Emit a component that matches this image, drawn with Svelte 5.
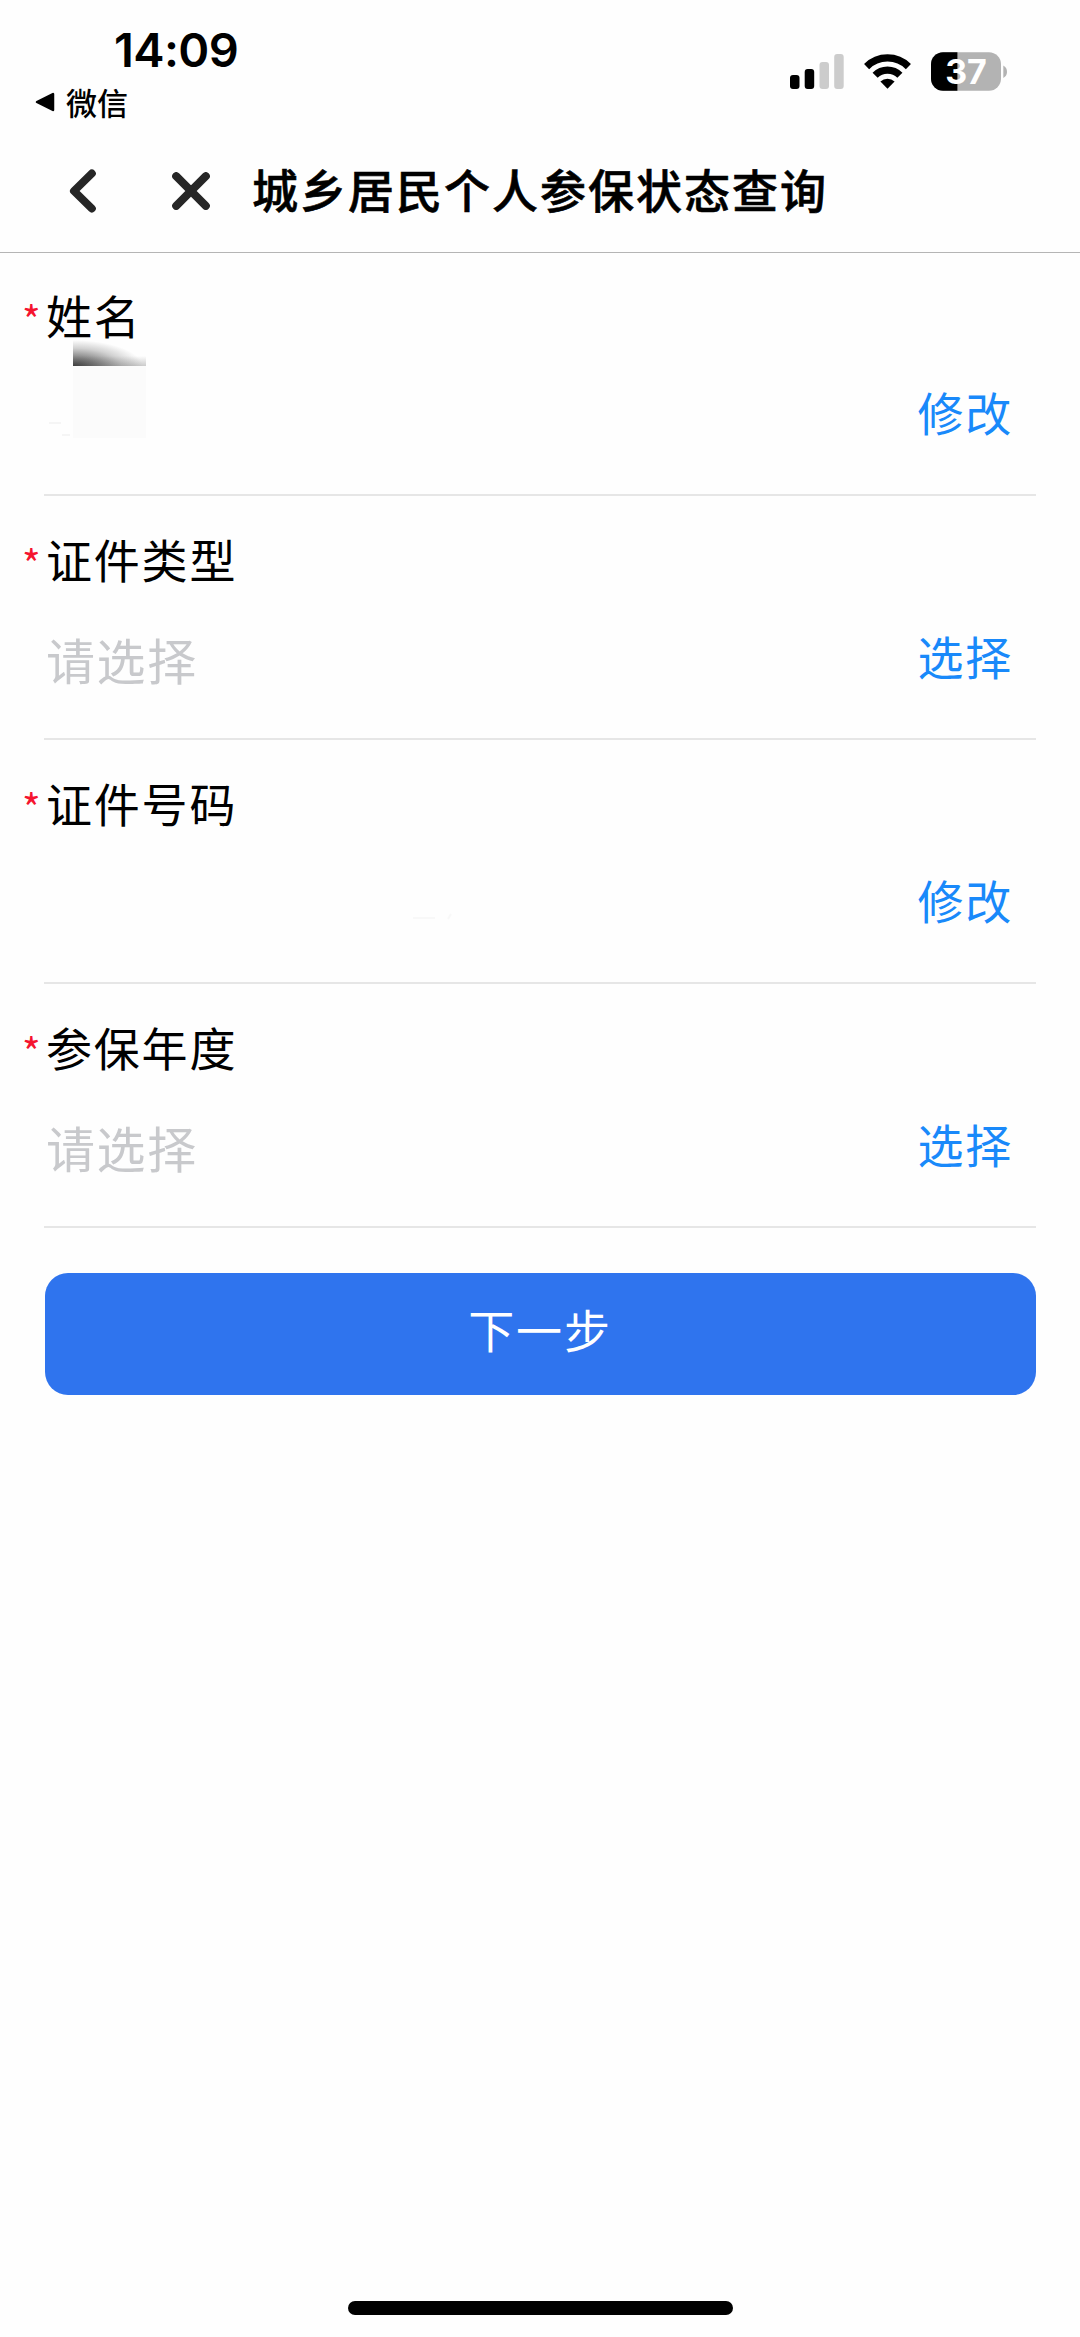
<script>
    const fields = [
        { label: '姓名', placeholder: '', action: '修改', mask: 'name' },
        { label: '证件类型', placeholder: '请选择', action: '选择' },
        { label: '证件号码', placeholder: '', action: '修改', mask: 'number' },
        { label: '参保年度', placeholder: '请选择', action: '选择' },
    ];
</script>

<style>
    :global(body) {
        background-color: #fefefe;
    }

    .page {
        display: flex;
        flex-direction: column;
        width: 1080px;
        height: 2337px;
        color: #000;
        font-family: Inter, "Noto Sans CJK SC", sans-serif;
    }

    header {
        height: 252px;
        box-shadow: 0 1px #b5b5b5;
    }

    .status {
        display: flex;
        justify-content: space-between;
        height: 126px;
    }

    .clock {
        padding: 20px 0 0 114px;
        font-size: 47px;
        font-weight: 600;
        letter-spacing: -0.6px;
        line-height: 60px;
    }

    .source {
        display: flex;
        align-items: center;
        gap: 11px;
        padding: 1px 0 0 35px;
        font-family: "Noto Sans CJK SC", sans-serif;
        font-size: 31px;
        font-weight: 500;
        line-height: 42px;
    }

    .indicators {
        width: 220px;
        height: 40px;
        margin: 52px 70px 0 0;
    }

    .indicators text {
        font-family: Inter, sans-serif;
        font-size: 34px;
        font-weight: 700;
    }

    nav {
        display: flex;
        align-items: center;
        height: 130px;
    }

    nav button {
        display: flex;
        padding: 0;
        border: none;
        background: none;
    }

    .back {
        margin-left: 69px;
    }

    .close {
        margin-left: 75px;
    }

    h1 {
        margin: 0 0 6px 42px;
        font-family: "Noto Sans CJK SC", sans-serif;
        font-size: 46px;
        font-weight: 500;
        letter-spacing: 2px;
        line-height: 60px;
        -webkit-text-stroke: 0.6px #000;
    }

    .field {
        position: relative;
        box-sizing: border-box;
        height: 243.9px;
        padding: 32px 0 0 22px;
    }

    .field::after {
        content: '';
        position: absolute;
        right: 44px;
        bottom: 0;
        left: 44px;
        height: 2px;
        background-color: #e6e6e6;
    }

    .label,
    .value {
        display: flex;
        font-family: "Noto Sans CJK SC", sans-serif;
        font-size: 46px;
        letter-spacing: 1.8px;
        line-height: 60px;
    }

    .required {
        width: 24px;
        height: 60px;
        color: #f5142f;
        font-size: 40px;
        letter-spacing: 0;
        line-height: 70px;
    }

    .value {
        justify-content: space-between;
        margin-top: 37px;
        padding: 0 67px 0 24px;
    }

    .placeholder {
        padding-top: 4px;
        color: #c8c9cc;
        font-size: 49px;
        letter-spacing: 1.6px;
    }

    .action {
        color: #1989fa;
    }

    .smudge {
        position: absolute;
        top: 86px;
        left: 46px;
    }

    .trace {
        position: absolute;
        top: 173px;
        left: 412px;
    }

    .next {
        height: 122px;
        margin: 45px 44.5px 0;
        padding: 0 0 11px;
        border: none;
        border-radius: 23px;
        background-color: #2f74ee;
        color: #fff;
        font-family: "Noto Sans CJK SC", sans-serif;
        font-size: 46px;
        letter-spacing: 1.8px;
    }

    .home {
        width: 385px;
        height: 14px;
        margin: auto auto 22px 348px;
        border-radius: 7px;
        background-color: #000;
    }
</style>

<div class="page">
    <header>
        <div class="status">
            <div>
                <div class="clock">14:09</div>
                <div class="source">
                    <svg width="20" height="20" viewBox="0 0 20 20">
                        <path d="M2 10 18 2V18Z" stroke="#000" stroke-width="2.5" stroke-linejoin="round" />
                    </svg>
                    微信
                </div>
            </div>
            <svg class="indicators" viewBox="790 52 220 40">
                <rect x="790" y="75" width="9.5" height="14" rx="3" />
                <rect x="804.7" y="69" width="9.5" height="20" rx="3" />
                <rect x="819.5" y="62" width="9.5" height="27" rx="3" fill="#ccc" />
                <rect x="834.2" y="54" width="9.5" height="35" rx="3" fill="#ccc" />
                <g fill="none" stroke="#000" stroke-width="7.2">
                    <path d="M866.6 66.6A29.5 29.5 0 0 1 908.4 66.6" />
                    <path d="M875.1 75.2A17.5 17.5 0 0 1 899.9 75.2" />
                </g>
                <path d="M880.4 81.6A10.5 10.5 0 0 1 894.6 81.6L887.5 88.8Z" />
                <clipPath id="battery">
                    <rect x="931" y="52.3" width="70" height="38.5" rx="12" />
                </clipPath>
                <g clip-path="url(#battery)">
                    <rect x="931" y="52" width="70" height="40" fill="#b3b3b3" />
                    <rect x="931" y="52" width="26.4" height="40" />
                </g>
                <path d="M1003.3 65.5Q1007 67.5 1007 71.7T1003.3 78Z" fill="#b3b3b3" />
                <text x="966" y="84" text-anchor="middle" fill="#fff">37</text>
            </svg>
        </div>
        <nav>
            <button class="back" aria-label="返回">
                <svg width="28" height="46" viewBox="0 0 28 46" fill="none" stroke="#262626" stroke-width="8" stroke-linecap="round" stroke-linejoin="round">
                    <path d="M22.8 5.5 5 23 22.8 40.5" />
                </svg>
            </button>
            <button class="close" aria-label="关闭">
                <svg width="38" height="38" viewBox="0 0 38 38" stroke="#262626" stroke-width="8" stroke-linecap="round">
                    <path d="M4.2 4.2 33.8 33.8M33.8 4.2 4.2 33.8" />
                </svg>
            </button>
            <h1>城乡居民个人参保状态查询</h1>
        </nav>
    </header>

    {#each fields as field}
        <div class="field">
            <div class="label">
                <span class="required">*</span>
                <span>{field.label}</span>
            </div>
            <div class="value">
                <span class="placeholder">{field.placeholder}</span>
                <span class="action">{field.action}</span>
            </div>
            {#if field.mask === 'name'}
                <svg class="smudge" width="102" height="102" viewBox="0 0 102 102">
                    <defs>
                        <radialGradient id="shade" gradientUnits="userSpaceOnUse" cx="0" cy="0" r="1" gradientTransform="translate(27 29) scale(70 27)">
                            <stop offset="0" stop-color="#333" stop-opacity="0.95" />
                            <stop offset="0.35" stop-color="#333" stop-opacity="0.6" />
                            <stop offset="0.7" stop-color="#333" stop-opacity="0.22" />
                            <stop offset="1" stop-color="#333" stop-opacity="0" />
                        </radialGradient>
                        <linearGradient id="edge" x1="0" y1="1" x2="0" y2="0">
                            <stop offset="0" stop-color="#333" stop-opacity="0.25" />
                            <stop offset="1" stop-color="#333" stop-opacity="0" />
                        </linearGradient>
                    </defs>
                    <path d="M27 0H100V28H27Z" fill="url(#shade)" />
                    <path d="M27 18H100V28H27Z" fill="url(#edge)" />
                    <path d="M27 28H100V100H27Z" fill="#fbfbfb" />
                    <path d="M3 85H15M16 97H24" stroke="#f5f5f5" stroke-width="2" />
                </svg>
            {:else if field.mask === 'number'}
                <svg class="trace" width="46" height="10" viewBox="0 0 46 10" fill="none" stroke="#f8f8f8" stroke-width="2">
                    <path d="M1 5H23M36 6 39 1" />
                </svg>
            {/if}
        </div>
    {/each}

    <button class="next">下一步</button>
    <div class="home"></div>
</div>
